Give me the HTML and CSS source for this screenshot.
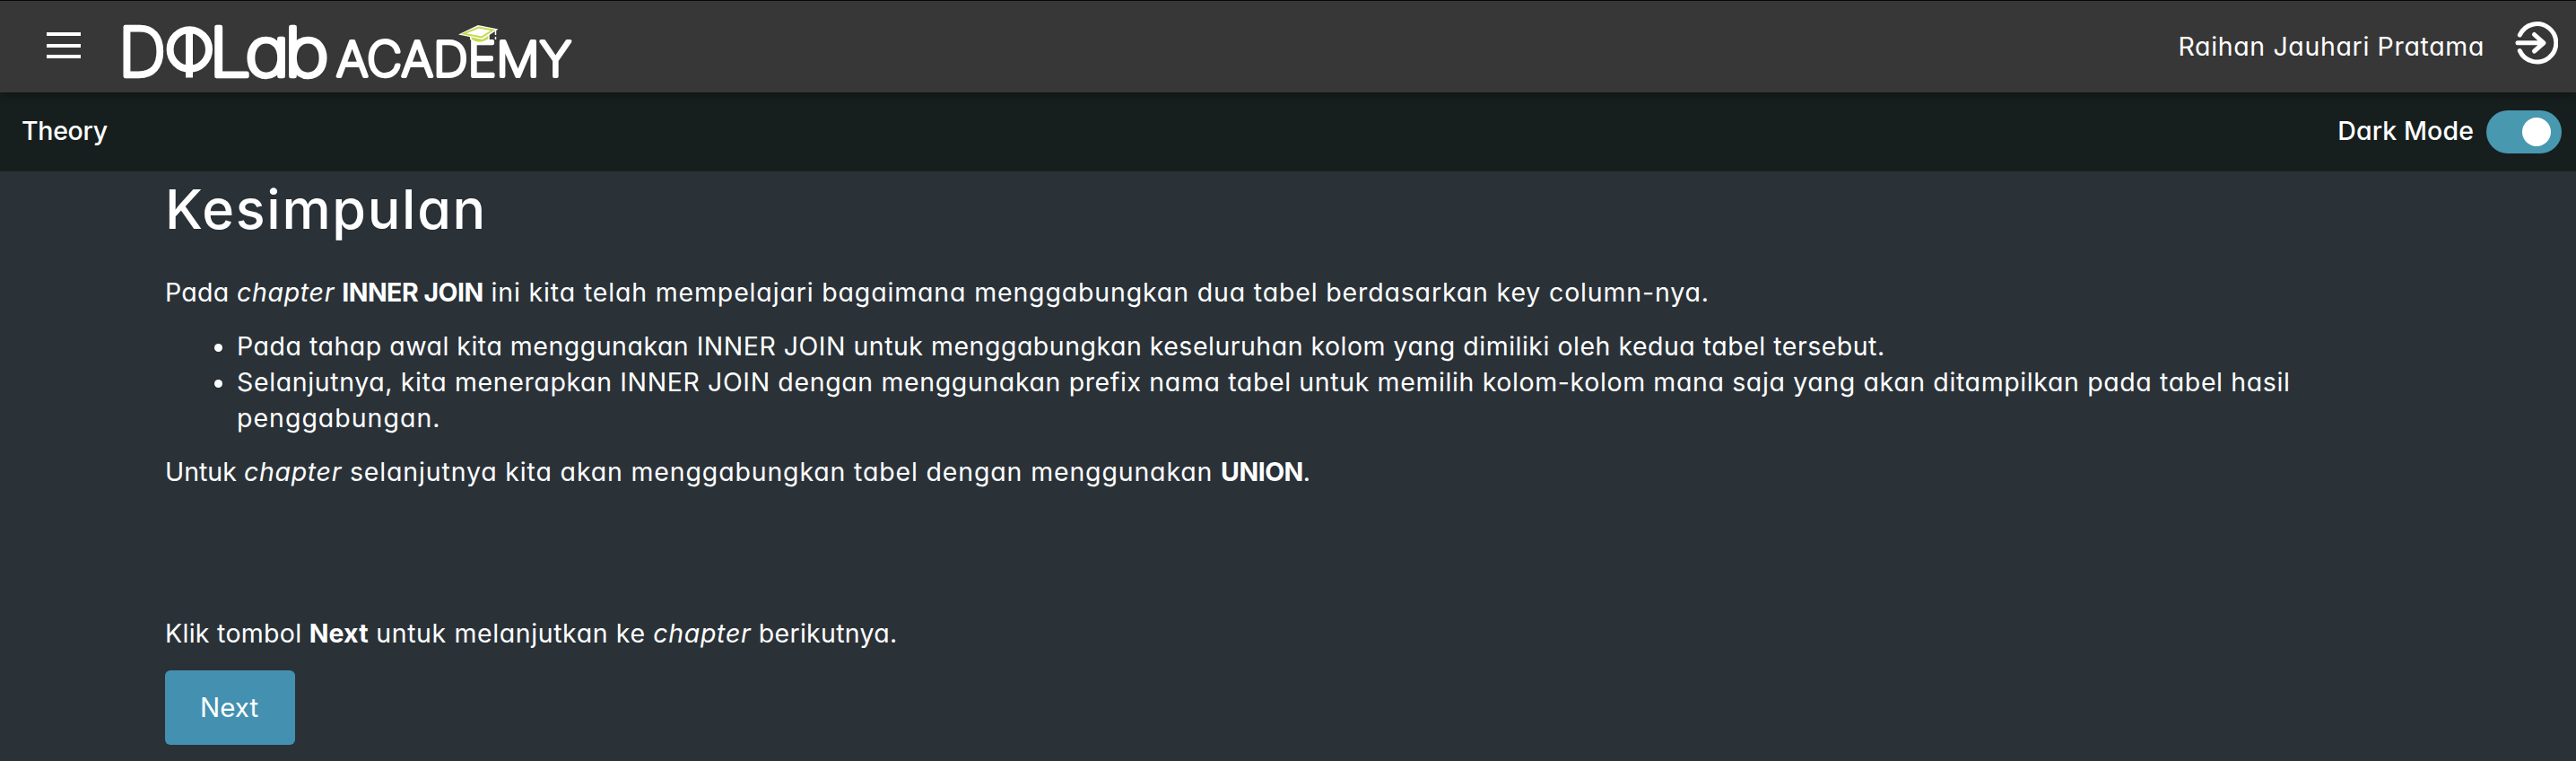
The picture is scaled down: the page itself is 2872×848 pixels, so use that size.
FILE: index.html
```html
<!DOCTYPE html>
<html lang="id">
<head>
<meta charset="utf-8">
<title>DQLab Academy</title>
<link rel="stylesheet" href="styles.css">
</head>
<body>
<header class="topbar">
  <button class="menu" aria-label="Menu"><span class="menu-bar"></span><span class="menu-bar"></span><span class="menu-bar"></span></button>
  <svg class="logo" width="540" height="102" viewBox="126 1 540 102" role="img" aria-label="DQLab Academy">
    <g class="logo-lab">
      <text x="132" y="85" textLength="53" lengthAdjust="spacingAndGlyphs">D</text>
      <text x="233" y="85" textLength="47" lengthAdjust="spacingAndGlyphs">L</text>
      <text x="273" y="85" textLength="50" lengthAdjust="spacingAndGlyphs">a</text>
      <text x="317" y="85" textLength="50" lengthAdjust="spacingAndGlyphs">b</text>
    </g>
    <ellipse cx="211.300" cy="55" rx="21.700" ry="21.700" fill="none" stroke="#fff" stroke-width="8"/>
    <path d="M211 33V86.500" stroke="#fff" stroke-width="8"/>
    <g class="logo-academy"><text x="375" y="85" textLength="262" lengthAdjust="spacingAndGlyphs">ACADEMY</text></g>
    <path d="M524 38L525 44Q534 51 545 44V37Z" fill="#c5d94b" stroke="#fff" stroke-width="1.500"/>
    <path d="M511 38.500L533 28L555.500 32.500L538 44Z" fill="#fff"/>
    <path d="M517 37.700L533.500 30.500L549.500 33.500L537 41.500Z" fill="#fff" stroke="#c5d94b" stroke-width="2"/>
    <path d="M552.500 33V39M552.500 41V44" stroke="#fff" stroke-width="1.500"/>
  </svg>
  <span class="user">Raihan Jauhari Pratama</span>
  <svg class="logout" width="52" height="52" viewBox="0 0 52 52" fill="none" stroke="#fff" stroke-width="5" stroke-linecap="round" stroke-linejoin="round">
    <path d="M9.300 17A21.200 21.200 0 1 1 9.300 34.600"/>
    <path d="M7 25.800H35M25.500 16.500L36 25.800L25.500 35"/>
  </svg>
</header>
<div class="subbar">
  <span class="section">Theory</span>
  <span class="mode">Dark Mode</span>
  <span class="toggle"><span class="knob"></span></span>
</div>
<main class="content">
  <h1>Kesimpulan</h1>
  <p><span class="short">Pada </span><em>chapter</em> <strong>INNER JOIN</strong><span class="wide"> ini kita telah mempelajari bagaimana menggabungkan dua tabel berdasarkan key column-nya.</span></p>
  <ul>
    <li class="first">Pada tahap awal kita menggunakan INNER JOIN untuk menggabungkan keseluruhan kolom yang dimiliki oleh kedua tabel tersebut.</li>
    <li class="second">Selanjutnya, kita menerapkan INNER JOIN dengan menggunakan prefix nama tabel untuk memilih kolom-kolom mana saja yang akan ditampilkan pada tabel hasil <span class="last">penggabungan.</span></li>
  </ul>
  <p>Untuk <em>chapter</em><span class="wide"> selanjutnya kita akan menggabungkan tabel dengan menggunakan </span><strong>UNION</strong>.</p>
  <p class="hint"><span class="short">Klik tombol </span><strong class="key">Next</strong><span class="mid"> untuk melanjutkan ke </span><em>chapter</em><span class="short"> berikutnya.</span></p>
  <button class="next">Next</button>
</main>
</body>
</html>
```
FILE: styles.css
```css
* { box-sizing: border-box; }
body {
  margin: 0;
  height: 848px;
  overflow: hidden;
  background: #2a3238;
  color: #fff;
  font-family: Inter, "Open Sans", sans-serif;
  font-size: 28.5px;
  line-height: 40px;
  font-feature-settings: "cv11";
}
button { border: 0; font: inherit; font-feature-settings: "cv11"; color: inherit; }
.topbar {
  position: relative;
  display: flex;
  align-items: flex-start;
  height: 103px;
  padding: 0 20px 0 52px;
  background: #373737;
  border-top: 1px solid #05060c;
  box-shadow: 0 2px 10px rgba(0, 0, 0, .45);
}
.menu {
  display: flex;
  flex-direction: column;
  gap: 8.5px;
  width: 38px;
  margin-top: 35px;
  padding: 0;
  background: none;
}
.menu-bar { height: 4px; background: #fff; }
.logo { margin-left: 36px; overflow: visible; }
.logo-lab, .logo-academy {
  font-family: Inter, sans-serif;
  font-weight: 200;
  fill: #fff;
  stroke: #fff;
  stroke-linejoin: round;
}
.logo-lab { font-size: 76px; stroke-width: 4.5px; }
.logo-academy { font-size: 54px; stroke-width: 4px; }
.user { margin: 31px 30px 0 auto; letter-spacing: .65px; }
.logout { margin-top: 21px; }
.subbar {
  display: flex;
  align-items: center;
  height: 88px;
  padding: 0 16px 0 24px;
  background: #171f1e;
  font-weight: 500;
}
.section { margin-top: -3px; letter-spacing: -.3px; }
.mode { margin: -3px 14px 0 auto; letter-spacing: .1px; }
.toggle {
  display: flex;
  justify-content: flex-end;
  align-items: center;
  width: 84px;
  height: 48px;
  padding-right: 12px;
  border-radius: 24px;
  background: #4898b0;
}
.knob { width: 32px; height: 32px; border-radius: 50%; background: #fff; }
.content { padding: 6px 184px 0; }
h1 { margin: 0 0 37px; font-size: 61px; line-height: 72px; font-weight: 550; letter-spacing: 1.7px; }
p, ul { margin: 0 0 20px; }
ul { padding-left: 80px; }
em { letter-spacing: .7px; }
strong { font-weight: 700; letter-spacing: -.5px; }
.short { letter-spacing: .3px; }
.mid { letter-spacing: .6px; }
.wide { letter-spacing: .84px; }
.first { letter-spacing: .5px; }
.second { letter-spacing: .62px; }
.last { letter-spacing: 1px; }
.key { letter-spacing: .1px; }
.hint { margin-top: 140px; margin-bottom: 21px; }
.next {
  display: block;
  width: 145px;
  height: 83px;
  padding: 0 2px 2px 0;
  border-radius: 6px;
  background: #4490b0;
  font-size: 29.5px;
}
```
